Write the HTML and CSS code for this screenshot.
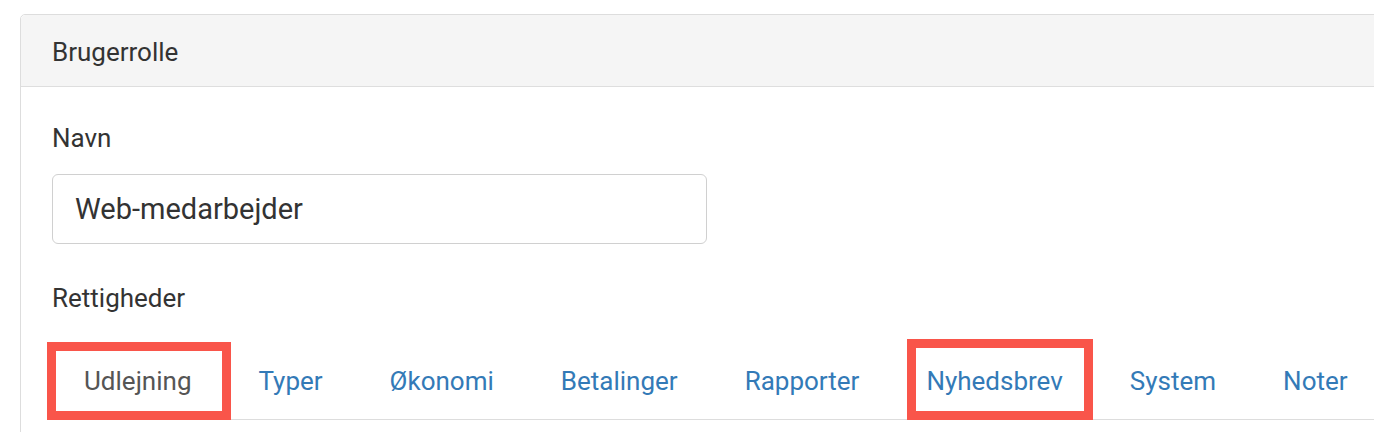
FILE: index.html
```
<!DOCTYPE html>
<html>
<head>
<meta charset="UTF-8">
<title>Brugerrolle</title>
<link rel="stylesheet" href="styles.css">
</head>
<body>
    <div class="panel">
        <div class="panel-heading">Brugerrolle</div>
        <div class="panel-body">
            <label class="field-label">Navn</label>
            <input class="text-input" type="text" value="Web-medarbejder">

            <label class="field-label rights-label">Rettigheder</label>
            <ul class="tabs">
                <li class="active"><a href="#">Udlejning</a><span class="mark mark-first"></span></li>
                <li><a href="#">Typer</a></li>
                <li><a href="#">Økonomi</a></li>
                <li><a href="#">Betalinger</a></li>
                <li><a href="#">Rapporter</a></li>
                <li><a href="#">Nyhedsbrev</a><span class="mark mark-news"></span></li>
                <li><a href="#">System</a></li>
                <li><a href="#">Noter</a></li>
            </ul>
        </div>
    </div>
</body>
</html>
```

FILE: styles.css
```
body
{
    margin: 0;
    overflow: hidden;
    background: #fff;
    font-family: Roboto, "Liberation Sans", Arial, sans-serif;
    font-size: 26px;
    color: #333;
}
.panel
{
    margin: 14px -40px 0 20px;
    border: 1px solid #ddd;
    border-radius: 5px;
    background: #fff;
}
.panel-heading
{
    padding: 18px 31px 15px;
    line-height: 38px;
    background: #f5f5f5;
    border-bottom: 1px solid #dedede;
    border-radius: 5px 5px 0 0;
}
.panel-body
{
    padding: 33px 31px 40px;
}
.field-label
{
    display: block;
    line-height: 36px;
    margin-bottom: 18px;
}
.text-input
{
    display: block;
    box-sizing: border-box;
    width: 655px;
    height: 70px;
    padding: 0 22px;
    margin: 0;
    border: 1px solid #d0d0d0;
    border-radius: 6px;
    font-family: Roboto, "Liberation Sans", Arial, sans-serif;
    font-size: 29px;
    color: #333;
    background: #fff;
}
.rights-label
{
    margin-top: 36px;
    margin-bottom: 37px;
}
.tabs
{
    display: flex;
    list-style: none;
    margin: 0;
    padding: 0;
    border-bottom: 1px solid #ddd;
}
.tabs li
{
    position: relative;
    margin-right: 3px;
}
.tabs a
{
    display: block;
    padding: 13px 32px 23px;
    line-height: 30px;
    color: #337ab7;
    text-decoration: none;
}
.tabs li.active a
{
    color: #555;
}
.mark
{
    position: absolute;
    border: 9px solid #f9554a;
    pointer-events: none;
}
.mark-first
{
    left: -5px;
    right: -7px;
    top: -11px;
    bottom: -1px;
}
.mark-news
{
    left: 13px;
    right: 2px;
    top: -14px;
    bottom: -1px;
}
```
